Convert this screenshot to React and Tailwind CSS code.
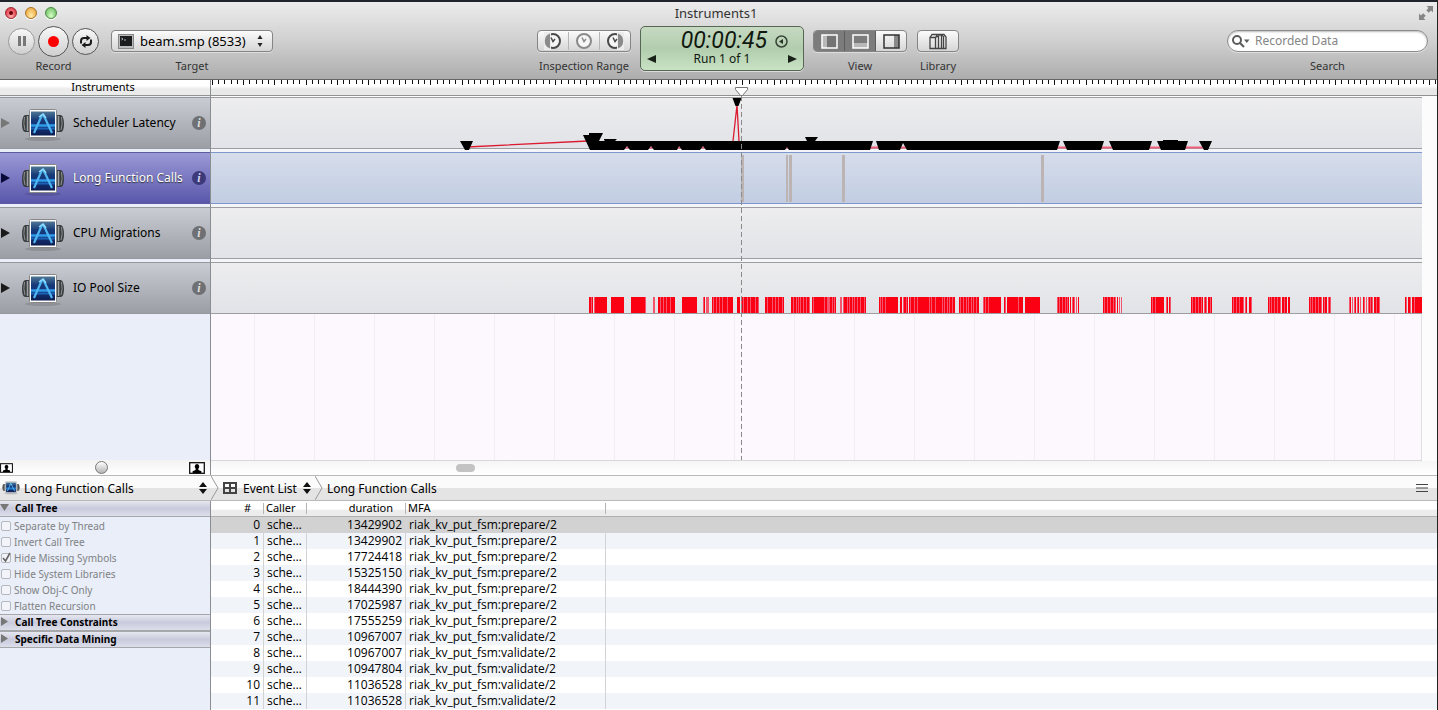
import React from 'react';

const EVENTS = [
  ['13429902', 'prepare'],
  ['13429902', 'prepare'],
  ['17724418', 'prepare'],
  ['15325150', 'prepare'],
  ['18444390', 'prepare'],
  ['17025987', 'prepare'],
  ['17555259', 'prepare'],
  ['10967007', 'validate'],
  ['10967007', 'validate'],
  ['10947804', 'validate'],
  ['11036528', 'validate'],
  ['11036528', 'validate'],
];

const INSTRUMENTS = [
  { name: 'Scheduler Latency', dim: true },
  { name: 'Long Function Calls', selected: true },
  { name: 'CPU Migrations' },
  { name: 'IO Pool Size' },
];

const OPTIONS = [
  ['Separate by Thread', false],
  ['Invert Call Tree', false],
  ['Hide Missing Symbols', true],
  ['Hide System Libraries', false],
  ['Show Obj-C Only', false],
  ['Flatten Recursion', false],
];

// One character per pixel: # full sample, + partial sample, . none
const POOL = [
  [378, '##+#.+############'],
  [400, '#############'],
  [420, '##############+'],
  [442, '++'],
  [447, '##+##+##+###+####'],
  [471, '###############'],
  [492, '+#.+++'],
  [501, '#+##+##+##+####+#####'],
  [526, '###.+#+###+##+####+##+'],
  [554, '##+####+##+##+###+#'],
  [580, '##+##+#+#+##+##+##+'],
  [601, '#+##########+##+++##+#+#'],
  [629, '++.+###+#+##+#+##+##+###+#'],
  [668, '#+#+##+############'],
  [689, '##.+##+#.#+###+##+###########+#+###+######+#+##+#+##+##'],
  [748, '#+##+##+#+##+#+##+##'],
  [772, '+#+##+############'],
  [793, '#+.###########+####'],
  [814, '###############'],
  [846, '+#+##+##+#+#.#.+#+.+.#'],
  [892, '#+##+##+##+#+.#.+.+'],
  [940, '#+##+########..+#.#+'],
  [980, '#+##+##+##+#.+#+.##+#'],
  [1021, '#+##+##+###+.+#..##+'],
  [1057, '#+#+##+##+##+.##+##.##'],
  [1098, '#+#+##+##+##+.#+##.+#+'],
  [1138, '+#.+.+#.+#.+..#+.+.+#+#+.##+##+'],
  [1194, '#+.##+.##+#######'],
];

const TICKS = Array.from({ length: 400 }, (_, i) => i);
const GRID = Array.from({ length: 50 }, (_, i) => 43 + i * 60);

function UpDown() {
  return (
    <svg width="8" height="12" viewBox="0 0 8 12" className="shrink-0">
      <path d="M4 0 8 5H0ZM4 12 0 7h8Z" fill="#111" />
    </svg>
  );
}

function InstrumentIcon({ className }) {
  return (
    <svg viewBox="0 0 44 34" className={className}>
      <defs>
        <linearGradient id="screen" x1="0" y1="0" x2="0" y2="1">
          <stop offset="0" stopColor="#4f7796" />
          <stop offset=".35" stopColor="#173a78" />
          <stop offset=".6" stopColor="#14357c" />
          <stop offset="1" stopColor="#0e1d50" />
        </linearGradient>
        <linearGradient id="handle" x1="0" y1="0" x2="1" y2="0">
          <stop offset="0" stopColor="#2c2f31" />
          <stop offset=".5" stopColor="#9fa3a4" />
          <stop offset="1" stopColor="#33373a" />
        </linearGradient>
      </defs>
      <ellipse cx="22" cy="31" rx="18" ry="2" fill="#000" opacity=".12" />
      <path d="M8 7H4Q1 9 1 16t3 8h4Z" fill="#3a3d3f" />
      <path d="M36 7h4q3 2 3 9t-3 8h-4Z" fill="#3a3d3f" />
      <path d="M3.500 9Q2 16 4 22M40.500 9q1.500 7-.5 13" stroke="#8f9394" fill="none" />
      <rect x="5" y="8" width="3" height="15" fill="url(#handle)" />
      <rect x="36" y="8" width="3" height="15" fill="url(#handle)" />
      <rect x="8.500" y="1.500" width="27" height="28" rx="1" fill="#fdfdfd" stroke="#888" />
      <rect x="10" y="3.500" width="24" height="24" fill="url(#screen)" />
      <path d="M10 17.500h24" stroke="#2e9be8" strokeWidth="2.500" />
      <path d="M10 20.500h24" stroke="#1b62b5" strokeWidth="2" />
      <path d="m21 7-8 18M22 6l9 19" stroke="#4fb6f2" strokeWidth="2.200" fill="none" />
      <path d="m18 9 4-3 3 4" stroke="#8fdcff" strokeWidth="1.500" fill="none" />
    </svg>
  );
}

function Dial({ side }) {
  const tone = side ? '#4a4a4a' : '#8a8a8a';
  return (
    <svg width="18" height="18" viewBox="0 0 18 18">
      <circle cx="9" cy="9" r="7" fill="#f6f6f6" stroke={tone} strokeWidth="2" />
      {side === 'left' && <path d="M7 0v18H0V0Z" fill="#ececec" />}
      {side === 'left' && <path d="M6 1.500A8 8 0 0 0 6 16.500Z" fill="#8b8b8b" />}
      {side === 'right' && <path d="M11 0v18h7V0Z" fill="#ececec" />}
      {side === 'right' && <path d="M12 1.500a8 8 0 0 1 0 15Z" fill="#8b8b8b" />}
      <path d="M7 5.500 9 9.500l2-2.500" fill="none" stroke={tone} strokeWidth="1.500" />
    </svg>
  );
}

function Tool({ label, children }) {
  return (
    <div className="flex flex-col items-center">
      <div className="flex h-8 items-center">{children}</div>
      <div className="mt-px h-4 text-[11px] leading-4 whitespace-nowrap text-[#333]">{label}</div>
    </div>
  );
}

function Light({ className, dot }) {
  return (
    <button
      aria-label="Window control"
      className={`flex size-3 items-center justify-center rounded-full border shadow-[0_1px_0_#fff] ${className}`}
    >
      {dot && <span className="size-1 rounded-full bg-[#6d0008]" />}
    </button>
  );
}

const PILL = 'flex h-[22px] overflow-hidden rounded border border-[#858585] bg-linear-to-b from-[#fbfbfb] to-[#d6d6d6] shadow-[0_1px_0_#ddd]';
const ROUND = 'flex items-center justify-center rounded-full border bg-linear-to-b from-[#f8f8f8] to-[#cfcfcf]';

function ViewIcon({ mode, dark }) {
  return (
    <svg width="17" height="15" viewBox="0 0 17 15">
      {mode === 'left' && <path d="M6 1h10v13H6Z" fill="#747474" />}
      {mode === 'left' && <path d="M1 1h5v13H1Z" fill="#b8b8b8" />}
      {mode === 'bottom' && <path d="M1 9h15v5H1Z" fill="#b8b8b8" />}
      {mode === 'right' && <path d="M11 1h5v13h-5Z" fill="#8a8a8a" />}
      <rect x="1" y="1" width="15" height="13" fill="none" stroke={dark ? '#fff' : '#333'} strokeWidth="1.500" />
    </svg>
  );
}

function Toolbar() {
  return (
    <header className="border-b border-[#666] bg-linear-to-b from-[#ececec] via-[#d0d0d0] to-[#adadad]">
      <div className="grid h-[22px] grid-cols-[1fr_auto_1fr] items-center pr-1 pl-[5px]">
        <div className="flex gap-2">
          <Light dot className="border-[#9c2a33] bg-radial-[at_50%_80%] from-[#ffb0b0] to-[#d91f2f]" />
          <Light className="border-[#a8722b] bg-radial-[at_50%_80%] from-[#ffeeaa] to-[#eb9a2c]" />
          <Light className="border-[#4a8a42] bg-radial-[at_50%_80%] from-[#d8ffc8] to-[#5cb552]" />
        </div>
        <h1 className="mr-[6px] text-[13px] leading-4 text-[#333]">Instruments1</h1>
        <button aria-label="Full screen" className="justify-self-end">
          <svg width="14" height="14" viewBox="0 0 14 14" fill="#858585">
            <path d="M7.500 0H14v6.500l-2-2L9.800 6.700 7.300 4.200 9.500 2ZM0 7.500l2 2 2.200-2.200 2.500 2.500L4.500 12l2 2H0Z" />
          </svg>
        </button>
      </div>
      <div className="flex h-[55px] items-start pt-px pr-[9px] pl-2">
        <div className="flex w-[529px] shrink-0 gap-3">
          <Tool label="Record">
            <div className="flex items-center gap-[3px]">
              <button aria-label="Pause" className={`${ROUND} size-[27px] border-[#999]`}>
                <span className="h-[10px] w-2 border-x-[3px] border-[#777]" />
              </button>
              <button aria-label="Record" className={`${ROUND} size-[31px] border-[#555]`}>
                <span className="size-[11px] rounded-full bg-[#fe0000]" />
              </button>
              <button aria-label="Loop" className={`${ROUND} size-[27px] border-[#555]`}>
                <svg width="14" height="13" viewBox="0 0 14 13" fill="none" stroke="#1b1b1b" strokeWidth="2">
                  <path d="M2 8.500V6q0-3 3-3h3M12 4.500V7q0 3-3 3H6" />
                  <path d="M7.500 0v6l4-3ZM6.500 13V7l-4 3Z" fill="#1b1b1b" stroke="none" />
                </svg>
              </button>
            </div>
          </Tool>
          <Tool label="Target">
            <button className={`${PILL} w-[162px] items-center pr-[9px] pl-[6px] text-[13px] text-black`}>
              <svg width="16" height="15" viewBox="0 0 16 15" className="shrink-0">
                <rect x=".5" y=".5" width="15" height="14" fill="#bbb" stroke="#888" />
                <rect x="2" y="2" width="12" height="10" fill="#1a1c1e" />
                <path d="m3.500 4 1.500 1-1.500 1M6 6h2" stroke="#ddd" fill="none" strokeWidth=".8" />
              </svg>
              <span className="ml-[6px] flex-1 text-left leading-5 whitespace-nowrap">beam.smp (8533)</span>
              <svg width="6" height="12" viewBox="0 0 6 12" className="shrink-0">
                <path d="M3 0 5.500 4h-5ZM3 12 .5 8h5Z" fill="#222" />
              </svg>
            </button>
          </Tool>
        </div>
        <Tool label="Inspection Range">
          <div className={`${PILL} w-[94px] items-center`}>
            <button aria-label="Range start" className="flex flex-1 justify-center"><Dial side="left" /></button>
            <button aria-label="Clear range" className="flex flex-1 justify-center border-x border-[#b5b5b5]"><Dial /></button>
            <button aria-label="Range end" className="flex flex-1 justify-center"><Dial side="right" /></button>
          </div>
        </Tool>
        <div className="mt-px ml-[9px] flex h-[45px] w-[164px] shrink-0 flex-col rounded-[5px] border border-[#566854] bg-linear-to-b from-[#c6dac2] via-[#b2ccae] to-[#c8e2c3] px-[6px] text-[#10180f] shadow-[0_1px_0_#ddd]">
          <div className="mt-1 flex h-5 items-center justify-end gap-2 pr-[9px]">
            <span className="font-['Roboto'] text-[23px] leading-5 italic">00:00:45</span>
            <svg width="13" height="13" viewBox="0 0 13 13">
              <circle cx="6.500" cy="6.500" r="5.500" fill="none" stroke="#364535" strokeWidth="1.500" />
              <path d="M4 6.500 8 4v5Z" fill="#263325" />
            </svg>
          </div>
          <div className="flex h-4 items-center justify-between text-[12px] leading-4">
            <button aria-label="Previous run"><svg width="9" height="8" viewBox="0 0 9 8"><path d="M0 4 9 0v8Z" fill="#182117" /></svg></button>
            <span>Run 1 of 1</span>
            <button aria-label="Next run"><svg width="9" height="8" viewBox="0 0 9 8"><path d="M9 4 0 0v8Z" fill="#182117" /></svg></button>
          </div>
        </div>
        <div className="ml-[9px] flex shrink-0 gap-[10px]">
          <Tool label="View">
            <div className={`${PILL} w-[94px]`}>
              <button aria-label="Instruments pane" className="flex flex-1 items-center justify-center bg-[#7c7c7c]"><ViewIcon mode="left" dark /></button>
              <button aria-label="Detail pane" className="flex flex-1 items-center justify-center border-x border-[#5c5c5c] bg-[#7c7c7c]"><ViewIcon mode="bottom" dark /></button>
              <button aria-label="Extended detail pane" className="flex flex-1 items-center justify-center"><ViewIcon mode="right" /></button>
            </div>
          </Tool>
          <Tool label="Library">
            <button aria-label="Library" className={`${PILL} w-[42px] items-center justify-center`}>
              <svg width="18" height="17" viewBox="0 0 18 17" fill="none" stroke="#444" strokeWidth="1.300">
                <path d="M1 4.500h5.500v11H1ZM1 4.500 3 1.500h5.500l-2 3M8.500 1.500H12l2 1.500M6.500 4.500 8 3.500h1.500v12h-3M9.500 3.500l1-2M9.500 15.500h3V3.500l-1-2M12.500 15.500h2V3M14.500 15.500H17V4l-2-2.500h-3" />
              </svg>
            </button>
          </Tool>
        </div>
        <div className="ml-auto">
          <Tool label={<label htmlFor="search">Search</label>}>
            <div className="flex h-[22px] w-[201px] items-center rounded-full border border-[#8b8b8b] bg-white pl-1 shadow-[inset_0_1px_2px_#bbb,0_1px_0_#ddd]">
              <svg width="18" height="13" viewBox="0 0 18 13">
                <circle cx="5" cy="5" r="4" fill="none" stroke="#5c5c5c" strokeWidth="2" />
                <path d="m8 8 4 4" stroke="#5c5c5c" strokeWidth="2.200" />
                <path d="M12 4.500h5.500L14.800 8Z" fill="#5c5c5c" />
              </svg>
              <input
                id="search"
                type="text"
                placeholder="Recorded Data"
                className="ml-[5px] w-0 flex-1 bg-transparent text-[12px] leading-5 text-black outline-none placeholder:text-[#858585]"
              />
            </div>
          </Tool>
        </div>
      </div>
    </header>
  );
}

function InstrumentRow({ name, dim, selected }) {
  return (
    <div
      className={`flex h-[52px] items-center border-y ${
        selected
          ? 'border-[#5c5aa0] bg-linear-to-b from-[#9c99d6] to-[#5a57ab] text-white [text-shadow:0_1px_1px_#333]'
          : 'border-[#94979c] bg-linear-to-b from-[#c9ccd2] to-[#9b9ea4] text-black'
      }`}
    >
      <button aria-label={`Expand ${name}`} className="shrink-0">
        <svg width="10" height="10" viewBox="0 0 10 10">
          <path d="M1 0 10 5 1 10Z" fill={dim ? '#777' : selected ? '#0b0b3a' : '#1b1b1b'} />
        </svg>
      </button>
      <InstrumentIcon className="mt-[3px] ml-[11px] h-[34px] w-11 shrink-0" />
      <span className="ml-2 flex-1 text-[12px] leading-5 whitespace-nowrap">{name}</span>
      <button
        aria-label={`${name} info`}
        className={`mr-1 flex size-[14px] shrink-0 items-center justify-center rounded-full font-['Liberation_Serif'] text-[12px] leading-3 font-bold italic [text-shadow:none] ${
          selected ? 'bg-[#3c3a78] text-[#d5d4f0]' : 'bg-[#6e7073] text-[#dedede]'
        }`}
      >
        i
      </button>
    </div>
  );
}

function Lane({ selected, children }) {
  return (
    <div
      className={`h-[52px] border-y ${
        selected
          ? 'border-[#7f98cc] bg-linear-to-b from-[#d6ddeb] to-[#c2cde2]'
          : 'border-[#9c9e9f] bg-linear-to-b from-[#ededee] to-[#e1e3e8]'
      }`}
    >
      <svg className="block h-full w-full overflow-visible">{children}</svg>
    </div>
  );
}

function Timeline() {
  return (
    <div className="relative flex min-w-0 flex-1 flex-col bg-[#fcfcfc]">
      <div className="h-4 border-b border-[#8f9390] bg-linear-to-b from-white from-40% to-[#e8e8e8] to-60%">
        <svg className="block h-full w-full" shapeRendering="crispEdges">
          {TICKS.map((i) => (
            <rect key={i} x={1 + Math.round(i * 6.24)} y="0" width="1" height={i % 5 === 0 ? 5 : 4} fill="#111" />
          ))}
        </svg>
      </div>
      <div className="mt-px mr-[15px] flex flex-1 flex-col gap-[3px] overflow-hidden border-b border-[#d8d8d8] bg-[#f4f5f8]">
        <Lane>
          <path d="M256 49 377 43M522 43l4-36 2 36" fill="none" stroke="#dc1a30" strokeWidth="1.300" />
          <path d="M378 49.500H996" stroke="#f0607c" strokeWidth="2" />
          <path
            d="M249 43h13l-4 9h-4ZM372 37h6v-2h14l-4 8h6l-1-1v-1h13l-2 2h192l-2-4h13l-3 4h58l-3 9h-81l-2-3-2 3h-79l-3-4-3 4h-18l-3-4-2 4h-23l-3-4-3 4h-18l-3-4-3 4h-34ZM521.500 0h9l-3 8h-3ZM665 43h184l-3 9H696l-4-7-3 7h-21ZM852 43h41l-3 9h-34ZM898 43h43l-3 9h-36ZM946 43h6v-1h15v1h10l-3 9h-24ZM988 43h13l-4 9h-4Z"
            fill="#000"
          />
        </Lane>
        <Lane selected>
          {[[530, 3], [575, 2], [578, 3], [631, 3], [830, 3]].map(([x, w]) => (
            <rect key={x} x={x} y="2" width={w} height="47" fill="#bbb4b3" />
          ))}
        </Lane>
        <Lane />
        <Lane>
          {POOL.map(([start, samples]) =>
            samples.split('').map((s, i) =>
              s === '.' ? null : (
                <rect key={start + i} x={start + i} y="34" width="1" height="16" fill={s === '#' ? '#fb0012' : '#f5556c'} />
              ),
            ),
          )}
        </Lane>
        <div className="-mt-[3px] flex-1 border-r border-[#e2dfe4] bg-[#fcf8fd]">
          <svg className="block h-[146px] w-full">
            {GRID.map((x) => (
              <rect key={x} x={x} y="0" width="1" height="100%" fill="#f2edf3" />
            ))}
          </svg>
        </div>
      </div>
      <div className="flex h-[14px] items-center bg-linear-to-b from-[#f6f6f6] to-white">
        <div className="ml-[245px] h-2 w-[19px] rounded-full bg-[#c3c3c3]" />
      </div>
      <svg className="pointer-events-none absolute top-[7px] left-[524px] h-[373px] w-[13px]">
        <path d="M.5.500h12v2l-5 6h-2l-5-6Z" fill="#fff" stroke="#777" />
        <path d="M6.500 9v364" stroke="#8a8a8a" strokeDasharray="5 3" />
      </svg>
    </div>
  );
}

function Person({ big }) {
  return (
    <svg width={big ? 16 : 13} height={big ? 12 : 10} viewBox="0 0 16 12" className="shrink-0">
      <rect x=".7" y=".7" width="14.600" height="10.600" fill="#fff" stroke="#111" strokeWidth="1.300" />
      <path d="M8 2a2.400 2.600 0 0 1 1.400 4.600V8l3 1.200V11H3.600V9.200l3-1.200V6.600A2.400 2.600 0 0 1 8 2Z" fill="#000" />
    </svg>
  );
}

function Chevron() {
  return (
    <svg width="8" height="24" viewBox="0 0 8 24" className="shrink-0">
      <path d="M0 0 7 12 0 24" fill="none" stroke="#999" />
    </svg>
  );
}

function SectionHeader({ title, open }) {
  return (
    <button
      className={`flex w-full items-center border-b border-[#a6a7ab] bg-linear-to-b from-[#e6e7f0] via-[#c9cbdd] to-[#dcdeea] pb-[2px] text-left text-[10px] leading-[14px] font-bold text-black ${
        open ? 'h-4' : 'h-[17px] border-t'
      }`}
    >
      <svg width="9" height="9" viewBox="0 0 9 9" className="shrink-0">
        <path d={open ? 'M0 1h9L4.500 8Z' : 'M1 0 8 4.500 1 9Z'} fill="#777" />
      </svg>
      <span className="ml-[6px] whitespace-nowrap">{title}</span>
    </button>
  );
}

function Options() {
  return (
    <aside className="w-[211px] shrink-0 border-r border-[#8a8d92] bg-[#e9eef8]">
      <SectionHeader title="Call Tree" open />
      <div className="pt-px">
        {OPTIONS.map(([label, on]) => (
          <label key={label} className="flex h-4 items-center gap-[3px] text-[10px] leading-4 text-[#808285]">
            <span className="grid size-[11px] place-items-center">
              <input
                type="checkbox"
                defaultChecked={on}
                className="peer col-start-1 row-start-1 size-[10px] appearance-none rounded-[2px] border border-[#b4b7bc] bg-[#f2f4f9]"
              />
              <svg viewBox="0 0 10 10" className="pointer-events-none invisible col-start-1 row-start-1 size-[10px] overflow-visible peer-checked:visible">
                <path d="m2 5 2.500 3L9 0" fill="none" stroke="#666" strokeWidth="1.600" />
              </svg>
            </span>
            {label}
          </label>
        ))}
      </div>
      <SectionHeader title="Call Tree Constraints" />
      <SectionHeader title="Specific Data Mining" />
    </aside>
  );
}

function EventTable() {
  const th = 'relative h-4 border-b border-[#b0b0b0] p-0 font-normal';
  const bar = 'absolute top-[2px] right-0 h-[11px] w-px bg-[#b5b5b5]';
  const td = 'h-4 border-r border-[#d3d3d3] p-0';
  return (
    <div className="min-w-0 flex-1 bg-white">
      <table className="w-full table-fixed border-separate border-spacing-0 text-[12px] leading-4 whitespace-nowrap text-black">
        <colgroup>
          <col className="w-[53px]" />
          <col className="w-[43px]" />
          <col className="w-[99px]" />
          <col className="w-[200px]" />
          <col />
        </colgroup>
        <thead>
          <tr className="bg-linear-to-b from-white from-50% to-[#ececec] to-60% align-top text-[11px] leading-[13px]">
            <th className={`${th} pr-[13px] text-right align-top`}>#<span className={bar} /></th>
            <th className={`${th} pl-[2px] text-left align-top`}>Caller<span className={bar} /></th>
            <th className={`${th} pr-[13px] text-right align-top`}>duration<span className={bar} /></th>
            <th className={`${th} pl-[2px] text-left align-top`}>MFA<span className={bar} /></th>
            <th className={th} />
          </tr>
        </thead>
        <tbody className="font-['Open_Sans','Noto_Sans',sans-serif]">
          {EVENTS.map(([duration, fn], i) => (
            <tr key={i} className={i === 0 ? 'bg-[#d2d2d2]' : i % 2 ? 'bg-[#f1f5fa]' : 'bg-white'}>
              <td className={`${td} pr-[3px] text-right`}>{i}</td>
              <td className={`${td} pl-[3px]`}>sche…</td>
              <td className={`${td} pr-[3px] text-right`}>{duration}</td>
              <td className={`${td} pl-[3px]`}>{`riak_kv_put_fsm:${fn}/2`}</td>
              <td className="h-4 p-0" />
            </tr>
          ))}
        </tbody>
      </table>
    </div>
  );
}

export default function App() {
  return (
    <div className="flex min-h-screen flex-col border-t-2 border-r border-t-[#20252b] border-r-[#222] bg-white font-['Noto_Sans',sans-serif] text-black">
      <Toolbar />
      <main className="flex flex-1 flex-col">
        <section className="flex">
          <div className="flex w-[211px] shrink-0 flex-col border-r border-[#8a8d92] bg-[#e9eef8]">
            <h2 className="h-4 border-b border-[#8f9390] bg-linear-to-b from-white from-40% to-[#ebebeb] to-60% pr-1 text-center text-[11px] leading-[13px]">
              Instruments
            </h2>
            <div className="mt-px flex flex-1 flex-col gap-[3px]">
              {INSTRUMENTS.map((it) => (
                <InstrumentRow key={it.name} {...it} />
              ))}
            </div>
            <div className="flex h-[15px] items-center bg-linear-to-b from-[#f3f3f3] to-white pr-[5px]">
              <Person />
              <input
                type="range"
                aria-label="Track height"
                defaultValue="50"
                className="mx-px h-[14px] w-0 flex-1 appearance-none bg-transparent [&::-webkit-slider-thumb]:size-[13px] [&::-webkit-slider-thumb]:appearance-none [&::-webkit-slider-thumb]:rounded-full [&::-webkit-slider-thumb]:border [&::-webkit-slider-thumb]:border-[#777] [&::-webkit-slider-thumb]:bg-linear-to-b [&::-webkit-slider-thumb]:from-white [&::-webkit-slider-thumb]:to-[#b5b5b5]"
              />
              <Person big />
            </div>
          </div>
          <Timeline />
        </section>
        <nav className="flex h-[26px] shrink-0 items-center border-y border-[#b9b9b9] bg-linear-to-b from-[#fbfbfb] from-50% to-[#e4e4e4] to-50% text-[12px] leading-5">
          <button className="flex w-[211px] shrink-0 items-center pr-1 pl-[2px]">
            <InstrumentIcon className="h-[14px] w-[18px]" />
            <span className="ml-1 flex-1 pt-px text-left">Long Function Calls</span>
            <UpDown />
          </button>
          <Chevron />
          <button className="ml-1 flex items-center">
            <svg width="14" height="12" viewBox="0 0 14 12" fill="none" stroke="#444" strokeWidth="2">
              <path d="M1 1h12v10H1ZM7 1v10M1 6h12" />
            </svg>
            <span className="mx-[6px] pt-px">Event List</span>
            <UpDown />
          </button>
          <span className="ml-1 flex"><Chevron /></span>
          <span className="ml-1 pt-px">Long Function Calls</span>
          <button aria-label="Detail menu" className="mr-[9px] ml-auto">
            <svg width="12" height="8" viewBox="0 0 12 8">
              <path d="M0 .5h12M0 4h12M0 7.500h12" stroke="#444" />
            </svg>
          </button>
        </nav>
        <section className="flex flex-1">
          <Options />
          <EventTable />
        </section>
      </main>
    </div>
  );
}
